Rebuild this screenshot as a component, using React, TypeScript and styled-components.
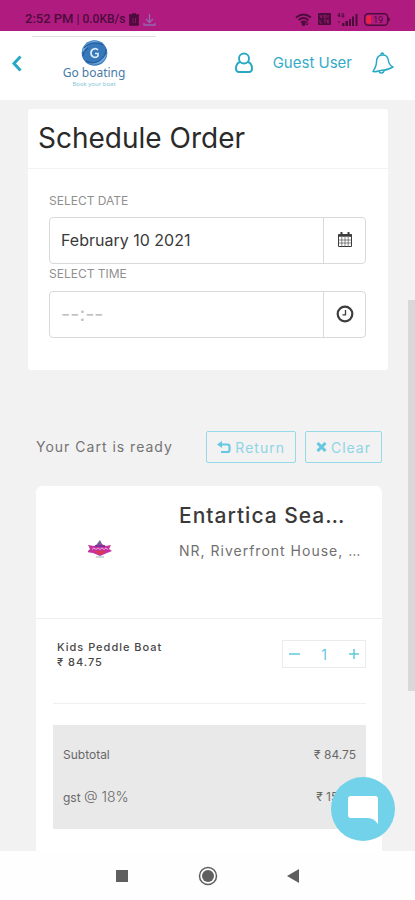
import React from "react";
import styled, { createGlobalStyle } from "styled-components";

const GlobalStyle = createGlobalStyle`
  *, *::before, *::after { box-sizing: border-box; }
  html, body { margin: 0; padding: 0; background: #f2f2f2; }
  body, button, input { font-family: Inter, "Open Sans", sans-serif; }
  h1, h2, p, dl, dt, dd { margin: 0; font-weight: 400; }
  button { cursor: pointer; }
`;

const Screen = styled.div`
  position: relative;
  display: flex;
  flex-direction: column;
  height: 100vh;
  overflow: hidden;
  background: #f2f2f2;
`;

const StatusBar = styled.div`
  display: flex;
  flex: none;
  justify-content: space-between;
  align-items: flex-end;
  height: 31px;
  padding: 0 24px 4px 25px;
  background: #b01b80;
  color: #4c0c3c;
`;

const StatusGroup = styled.div<{ $gap: number }>`
  display: flex;
  align-items: center;
  gap: ${(p) => p.$gap}px;
  height: 16px;
  white-space: nowrap;
`;

const Clock = styled.span`
  font: 500 13px/16px Roboto, sans-serif;
`;

const Speed = styled.span`
  font: 500 12px/16px Roboto, sans-serif;
`;

const Header = styled.header`
  display: flex;
  flex: none;
  align-items: center;
  height: 69px;
  padding: 0 20px 5px 11px;
  background: #fff;
`;

const IconButton = styled.button`
  display: flex;
  padding: 0;
  border: 0;
  background: none;
  color: #27a9c4;
`;

const Logo = styled.a`
  display: flex;
  flex-direction: column;
  align-items: center;
  align-self: flex-start;
  width: 124px;
  margin: 5px 0 0 10px;
  padding-top: 3px;
  border-top: 1px solid #e2e0e3;
  text-decoration: none;
`;

const LogoName = styled.span`
  color: #4a7aa8;
  font: 400 12px/14px "Noto Sans", sans-serif;
`;

const LogoTagline = styled.span`
  color: #86c4d8;
  font: 400 6px/8px "Noto Sans", sans-serif;
`;

const Account = styled.div`
  display: flex;
  align-items: center;
  gap: 19px;
  margin-left: auto;
`;

const UserLink = styled.a`
  color: #36abc6;
  font-size: 15px;
  line-height: 20px;
  text-decoration: none;
  white-space: nowrap;
`;

const Content = styled.main`
  flex: 1;
  min-height: 0;
  overflow: hidden;
`;

const ScheduleCard = styled.section`
  margin: 9px 27px 0 28px;
  border-radius: 3px;
  background: #fff;
`;

const CardTitle = styled.h1`
  height: 60px;
  padding: 0 10px;
  border-bottom: 1px solid #f3f3f3;
  color: #2a2a2a;
  font-size: 28px;
  line-height: 59px;
  white-space: nowrap;
`;

const Fields = styled.form`
  padding: 22px 22px 32px 21px;
`;

const FieldLabel = styled.label`
  display: block;
  height: 26px;
  color: #8f8f8f;
  font-size: 12px;
  line-height: 20px;
`;

const InputGroup = styled.div`
  display: flex;
  height: 47px;
  border: 1px solid #d9d9d9;
  border-radius: 4px;
  background: #fff;
  & + label { height: 27px; }
`;

const TextInput = styled.input`
  flex: 1;
  min-width: 0;
  padding: 0 11px 2px;
  border: 0;
  outline: 0;
  background: none;
  color: #3a3a3a;
  font-size: 16px;
  &::placeholder { color: #c0c0c0; opacity: 1; }
  &:placeholder-shown { font-size: 20px; }
`;

const InputButton = styled.button`
  display: flex;
  align-items: center;
  justify-content: center;
  width: 42px;
  padding: 0 0 2px;
  border: 0;
  border-left: 1px solid #d9d9d9;
  background: none;
  color: #3c3c3c;
`;

const CartBar = styled.div`
  display: flex;
  align-items: center;
  gap: 9px;
  margin: 61px 33px 0 36px;
`;

const CartMessage = styled.p`
  flex: 1;
  color: #747474;
  font-size: 14px;
  line-height: 20px;
  letter-spacing: 1px;
  white-space: nowrap;
`;

const OutlineButton = styled.button`
  display: flex;
  align-items: center;
  justify-content: center;
  gap: 4px;
  height: 32px;
  padding: 0 10px;
  border: 1px solid #96dae9;
  border-radius: 2px;
  background: none;
  color: #8ed5e6;
  font-size: 14px;
  letter-spacing: 1px;
  svg { color: #66c7e3; }
`;

const CartCard = styled.section`
  min-height: 400px;
  margin: 23px 33px 0 36px;
  border-radius: 6px 6px 0 0;
  background: #fff;
`;

const Vendor = styled.div`
  display: grid;
  grid-template-columns: 127px minmax(0, 1fr);
  gap: 16px;
  height: 133px;
  padding: 16px 16px 0 0;
  border-bottom: 1px solid #eee;
`;

const VendorLogo = styled.div`
  display: flex;
  justify-content: center;
  padding-top: 38px;
`;

const VendorName = styled.h2`
  color: #3a3a3a;
  font-size: 21px;
  font-weight: 500;
  line-height: 28px;
  letter-spacing: 1px;
  white-space: nowrap;
`;

const VendorAddress = styled.p`
  margin-top: 11px;
  color: #707070;
  font-size: 14px;
  line-height: 20px;
  letter-spacing: 1px;
  white-space: nowrap;
`;

const Item = styled.div`
  display: flex;
  justify-content: space-between;
  align-items: flex-start;
  height: 85px;
  margin: 0 16px 0 17px;
  padding: 21px 0 0 4px;
  border-bottom: 1px solid #f0f0f0;
`;

const ItemText = styled.p`
  color: #484848;
  font-size: 11px;
  font-weight: 500;
  line-height: 15px;
  letter-spacing: 1px;
  white-space: nowrap;
`;

const Stepper = styled.div`
  display: flex;
  align-items: center;
  justify-content: space-between;
  width: 84px;
  height: 28px;
  padding: 0 5px;
  border: 1px solid #ebebeb;
  color: #62c9dc;
  font-size: 14px;
  button { color: #62c9dc; }
`;

const Summary = styled.dl`
  margin: 21px 16px 0 17px;
  padding: 20px 10px 21px;
  background: #e9e9e9;
`;

const SummaryRow = styled.div`
  display: flex;
  justify-content: space-between;
  color: #686868;
  font-size: 12px;
  line-height: 20px;
  & + & { margin-top: 22px; }
`;

const Rate = styled.span`
  font-size: 14px;
  font-weight: 300;
`;

const ScrollThumb = styled.div`
  position: absolute;
  top: 300px;
  right: 0;
  width: 7px;
  height: 391px;
  background: #d8d8d8;
`;

const ChatButton = styled.button`
  position: absolute;
  right: 20px;
  bottom: 59px;
  display: flex;
  align-items: center;
  justify-content: center;
  width: 64px;
  height: 64px;
  padding: 0;
  border: 0;
  border-radius: 50%;
  background: #72d2e9;
`;

const NavBar = styled.nav`
  display: flex;
  flex: none;
  align-items: center;
  justify-content: center;
  gap: 66px;
  height: 49px;
  background: #fefefe;
`;

const NavButton = styled(IconButton)`
  color: #5f5f5f;
`;

const TrashIcon = () => (
  <svg width="12" height="14" viewBox="0 0 12 14">
    <path d="M1 3h10M4 2h4M2 4h8v9H2z" fill="currentColor" stroke="currentColor" strokeWidth="1.6" />
    <path d="M5 6v5M7.500 6v5" stroke="#a51a79" strokeWidth=".7" />
  </svg>
);

const DownloadIcon = () => (
  <svg width="13" height="13" viewBox="0 0 13 13" fill="none" stroke="#9467ae" strokeWidth="1.3">
    <path d="M6.500 1v8M3 6l3.500 3.500L10 6M1 10v2h11v-2" />
  </svg>
);

const WifiIcon = () => (
  <svg width="17" height="13" viewBox="0 0 17 13" fill="none" stroke="currentColor" strokeWidth="1.8">
    <path d="M1 4.500q7.500-6 15 0M3.500 7q5-4 10 0M6 9.500q2.500-2 5 0" />
    <circle cx="8.500" cy="11" r="1" fill="currentColor" />
    <path d="M12 7v5M10.500 10.500L12 12l1.500-1.500" strokeWidth=".9" />
  </svg>
);

const VolteIcon = () => (
  <svg width="13" height="12" viewBox="0 0 13 12">
    <rect width="13" height="12" rx="1" fill="currentColor" />
    <path d="M2 2l1.200 3L4.500 2M6 2.300h2v2.500H6zM10 2v3M2 7v3h2M5.500 7h3M7 7v3M11 7H9.500v3H11M9.500 8.500H11" fill="none" stroke="#a51a79" strokeWidth=".8" />
  </svg>
);

const SignalIcon = () => (
  <svg width="21" height="13" viewBox="0 0 21 13">
    <path d="M2.500 0L.8 3h2.500M2.500 0v4.200M7 .8H5v3h2V2.400H6M1 9h2" fill="none" stroke="currentColor" strokeWidth=".9" />
    <path d="M5 10h2.500v3H5zM8.500 8H11v5H8.500zM12 6h2v7h-2zM15 3.500h2V13h-2zM18.500 1h2v12h-2z" fill="currentColor" />
  </svg>
);

const BatteryIcon = () => (
  <svg width="27" height="13" viewBox="0 0 27 13">
    <rect x=".7" y=".7" width="23" height="11.600" rx="3.500" fill="none" stroke="currentColor" strokeWidth="1.4" />
    <path d="M24 4l2.500 2.500L24 9z" fill="currentColor" />
    <path d="M4 2.500h3v8H4q-1.500 0-1.500-1.500V4q0-1.500 1.500-1.500z" fill="#f3203f" />
    <text x="9" y="10" fontFamily="Roboto, sans-serif" fontSize="9" fill="currentColor">19</text>
  </svg>
);

const BackIcon = () => (
  <svg width="11" height="17" viewBox="0 0 11 17" fill="none" stroke="currentColor" strokeWidth="3">
    <path d="M9.500 1.500L3 8.500l6.500 7" />
  </svg>
);

const LogoMark = () => (
  <svg width="27" height="26" viewBox="0 0 27 26">
    <circle cx="13.500" cy="13" r="12.800" fill="#3778ba" />
    <path d="M1 11C3 3 12-2 20 3c-8-1-14 1-17 9zM26 14c-2 9-11 13-19 9 8 1 13-2 16-8z" fill="#69a7d8" />
    <path d="M3 8c4-5 12-7 19-3M5 21c7 4 14 1 18-5M2 16c0-3 2-6 5-8M25 9c0 4-1 7-4 9" fill="none" stroke="#245b9f" strokeWidth="1.200" />
    <path d="M17 10c-2.500-2.500-7-1-7 3 0 4 4.500 5.500 7 3v-2.500h-3" fill="none" stroke="#dbeaf8" strokeWidth="1.700" />
  </svg>
);

const UserIcon = () => (
  <svg width="20" height="22" viewBox="0 0 20 22" fill="none" stroke="currentColor" strokeWidth="1.900">
    <circle cx="10" cy="6.500" r="5" />
    <path d="M6 10c-3 1-4 3.500-4 6.500 0 2.300 1 3.500 3 3.500h10c2 0 3-1.200 3-3.500 0-3-1-5.500-4-6.500" />
  </svg>
);

const BellIcon = () => (
  <svg width="24" height="24" viewBox="0 0 24 24" fill="none" stroke="currentColor" strokeWidth="1.500" strokeLinejoin="round">
    <path d="M11 4C6.500 4.500 5.500 8 5.500 11c0 4-1.300 6-3.500 9.500 5 .8 7-1.500 11-1.500 3.500 0 5.500-1 9-3-2.500-1-4-3-4.500-6C17 6 15 3.500 11 4z" />
    <path d="M10 3.800c-.5-2 2.500-2.500 2.700-.2M8 20.300c.8 2.800 4.500 2 5.500-1" />
  </svg>
);

const CalendarIcon = () => (
  <svg width="16" height="17" viewBox="0 0 16 17" fill="none" stroke="currentColor">
    <path d="M1.500 3.500h13v12h-13z" />
    <path d="M1.500 4.500h13" strokeWidth="2.500" />
    <path d="M4.500 1v3.500M11.500 1v3.500" strokeWidth="2" />
    <path d="M4.800 6v9M8 6v9M11.200 6v9M2 9h12M2 12h12" strokeWidth=".6" />
  </svg>
);

const ClockIcon = () => (
  <svg width="18" height="18" viewBox="0 0 18 18" fill="none" stroke="currentColor">
    <circle cx="9" cy="9" r="7.300" strokeWidth="2.200" />
    <path d="M9.500 5v4.800H6.500" strokeWidth="1.300" />
  </svg>
);

const ReturnIcon = () => (
  <svg width="14" height="13" viewBox="0 0 14 13">
    <path d="M4 3.500h6.500q2 0 2 2v3.500q0 2-2 2H4" fill="none" stroke="currentColor" strokeWidth="2.200" />
    <path d="M0 3.500L5 0v7z" fill="currentColor" />
  </svg>
);

const CrossIcon = () => (
  <svg width="11" height="10" viewBox="0 0 11 10" stroke="currentColor" strokeWidth="3">
    <path d="M1.500 1l8 8M9.500 1l-8 8" />
  </svg>
);

const VendorMark = () => (
  <svg width="24" height="19" viewBox="0 0 24 19">
    <path d="M9 4l3-4 2 4 3 2H7z" fill="#70609b" />
    <path d="M0 5l6 1 6-2 6 2 5-1-2 4 3 2-5 2-7 3-7-3-6-1 3-3z" fill="#c6319e" />
    <path d="M6 11h12l-6 4z" fill="#d83a4e" />
    <path d="M4 9.500l2-1.500 2 1.500 2-1.500 2 1.500 2-1.500 2 1.500 2-1.500 2 1.500" fill="none" stroke="#eeb4e2" strokeWidth=".9" />
    <path d="M7 6h10" stroke="#5a3b98" strokeWidth="1.500" />
    <path d="M8 17h8" stroke="#b7cfd5" strokeWidth="1.500" />
  </svg>
);

const MinusIcon = () => (
  <svg width="12" height="12" viewBox="0 0 12 12" stroke="currentColor" strokeWidth="1.500">
    <path d="M1 6h11" />
  </svg>
);

const PlusIcon = () => (
  <svg width="12" height="12" viewBox="0 0 12 12" stroke="currentColor" strokeWidth="1.500">
    <path d="M1 6h10M6 1v10" />
  </svg>
);

const ChatIcon = () => (
  <svg width="32" height="30" viewBox="0 0 32 30">
    <path d="M4 2h24q3 0 3 3v25q-4-6-10-6H4q-3 0-3-3V5q0-3 3-3z" fill="#fff" />
  </svg>
);

const lines = [
  { label: <>Subtotal</>, amount: "₹ 84.75" },
  { label: <>gst <Rate>@ 18%</Rate></>, amount: "₹ 15.25" },
];

export default function App() {
  return (
    <>
      <GlobalStyle />
      <Screen>
        <StatusBar>
          <StatusGroup $gap={3}>
            <Clock>2:52 PM</Clock>
            <Speed>| 0.0KB/s</Speed>
            <TrashIcon />
            <DownloadIcon />
          </StatusGroup>
          <StatusGroup $gap={6}>
            <WifiIcon />
            <VolteIcon />
            <SignalIcon />
            <BatteryIcon />
          </StatusGroup>
        </StatusBar>
        <Header>
          <IconButton aria-label="Back"><BackIcon /></IconButton>
          <Logo href="#home">
            <LogoMark />
            <LogoName>Go boating</LogoName>
            <LogoTagline>Book your boat</LogoTagline>
          </Logo>
          <Account>
            <IconButton aria-label="Profile"><UserIcon /></IconButton>
            <UserLink href="#account">Guest User</UserLink>
            <IconButton aria-label="Notifications"><BellIcon /></IconButton>
          </Account>
        </Header>
        <Content>
          <ScheduleCard>
            <CardTitle>Schedule Order</CardTitle>
            <Fields onSubmit={(e) => e.preventDefault()}>
              <FieldLabel htmlFor="date">SELECT DATE</FieldLabel>
              <InputGroup>
                <TextInput id="date" defaultValue="February 10 2021" />
                <InputButton type="button" aria-label="Open calendar"><CalendarIcon /></InputButton>
              </InputGroup>
              <FieldLabel htmlFor="time">SELECT TIME</FieldLabel>
              <InputGroup>
                <TextInput id="time" placeholder="--:--" />
                <InputButton type="button" aria-label="Open clock"><ClockIcon /></InputButton>
              </InputGroup>
            </Fields>
          </ScheduleCard>
          <CartBar>
            <CartMessage>Your Cart is ready</CartMessage>
            <OutlineButton><ReturnIcon />Return</OutlineButton>
            <OutlineButton><CrossIcon />Clear</OutlineButton>
          </CartBar>
          <CartCard>
            <Vendor>
              <VendorLogo><VendorMark /></VendorLogo>
              <div>
                <VendorName>Entartica Sea…</VendorName>
                <VendorAddress>NR, Riverfront House, …</VendorAddress>
              </div>
            </Vendor>
            <Item>
              <div>
                <ItemText>Kids Peddle Boat</ItemText>
                <ItemText>₹ 84.75</ItemText>
              </div>
              <Stepper>
                <IconButton aria-label="Remove one"><MinusIcon /></IconButton>
                <span>1</span>
                <IconButton aria-label="Add one"><PlusIcon /></IconButton>
              </Stepper>
            </Item>
            <Summary>
              {lines.map((line) => (
                <SummaryRow key={line.amount}>
                  <dt>{line.label}</dt>
                  <dd>{line.amount}</dd>
                </SummaryRow>
              ))}
            </Summary>
          </CartCard>
        </Content>
        <NavBar>
          <NavButton aria-label="Recent apps">
            <svg width="20" height="20" viewBox="0 0 20 20"><path d="M4 4h12v12H4z" fill="currentColor" /></svg>
          </NavButton>
          <NavButton aria-label="Home">
            <svg width="20" height="20" viewBox="0 0 20 20">
              <circle cx="10" cy="10" r="8.500" fill="none" stroke="currentColor" strokeWidth="1.500" />
              <circle cx="10" cy="10" r="6" fill="currentColor" />
            </svg>
          </NavButton>
          <NavButton aria-label="Go back">
            <svg width="20" height="20" viewBox="0 0 20 20"><path d="M15 3v14L3 10z" fill="currentColor" /></svg>
          </NavButton>
        </NavBar>
        <ScrollThumb />
        <ChatButton aria-label="Open chat"><ChatIcon /></ChatButton>
      </Screen>
    </>
  );
}
